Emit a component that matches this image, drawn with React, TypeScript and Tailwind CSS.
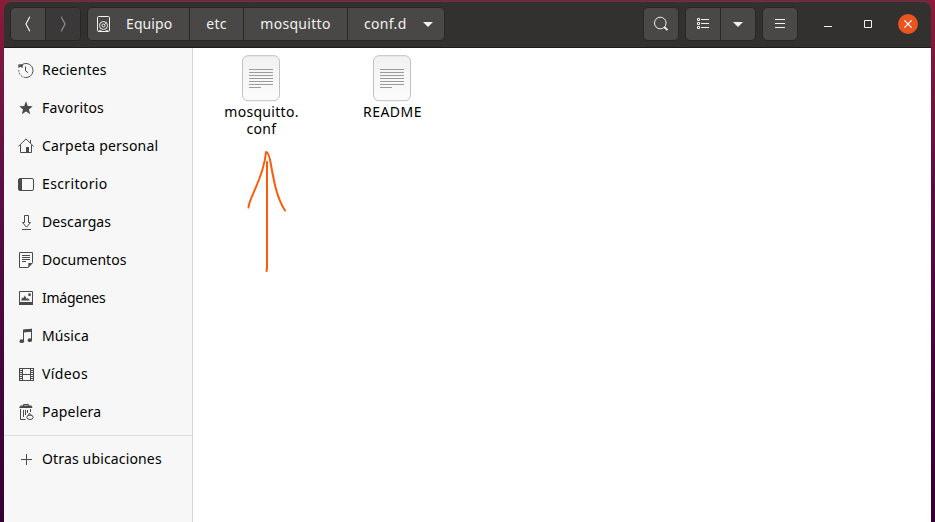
import React from 'react';

type IconProps = { children: React.ReactNode };

function Icon({ children }: IconProps) {
  return (
    <svg width="16" height="16" viewBox="0 0 16 16" fill="none" stroke="#4a4a4a" strokeWidth="1" className="shrink-0">
      {children}
    </svg>
  );
}

const places = [
  {
    label: 'Recientes',
    tracking: 'tracking-[0.17px]',
    icon: (
      <>
        <path d="M3.2 3.4A7 7 0 1 1 7.5 15.5" />
        <path d="M7.5 15.5A7 7 0 0 1 .8 8" strokeDasharray="2 1.2" />
        <path d="M.2 2.5 5 2.2 4.5 6 2.5 4.8.5 6Z" fill="#4a4a4a" stroke="none" />
        <path d="M7.5 4.5v4.3l2.5 1.9" />
      </>
    ),
  },
  {
    label: 'Favoritos',
    tracking: 'tracking-[0.18px]',
    icon: <path d="m8 1.3 1.8 4.7 5 .3-3.9 3.1 1.3 4.9L8 11.500l-4.200 2.800 1.300-4.900L1.200 6.300l5-.3Z" fill="#4a4a4a" stroke="none" />,
  },
  {
    label: 'Carpeta personal',
    tracking: 'tracking-[0.2px]',
    icon: (
      <>
        <path d="M.5 8.3 8 .9l7.500 7.400M2.500 7v7.500h11V7M12.500 5V2" />
        <path d="M8 9h3v5.500H8Z" fill="#4a4a4a" stroke="none" />
      </>
    ),
  },
  {
    label: 'Escritorio',
    tracking: 'tracking-[0.36px]',
    icon: (
      <>
        <rect x=".5" y="2.5" width="15" height="12" rx="1.5" />
        <path d="M1 3h3v11H1Z" fill="#4a4a4a" stroke="none" />
      </>
    ),
  },
  {
    label: 'Descargas',
    tracking: 'tracking-[0.1px]',
    icon: <path d="M6.5 1.5h4v7h2l-4 4.7-4-4.7h2ZM4 15.5h9" />,
  },
  {
    label: 'Documentos',
    tracking: 'tracking-[0.06px]',
    icon: (
      <>
        <path d="M1.5.5h13v10.2l-4.3 4.8H1.5ZM4 3.5h8M4 5.5h8M4 7.5h8M4 9.5h4" />
        <path d="M14.5 11h-4.2v4.5Z" fill="#4a4a4a" stroke="none" />
      </>
    ),
  },
  {
    label: 'Imágenes',
    tracking: 'tracking-[-0.25px]',
    icon: (
      <>
        <path d="M1.5 1.5h13v12h-13Z" />
        <path d="M1 12h14v3H1ZM3 10.5l1.5-3 1 .5 1.3-2.5 2 3.5 1-1 2 2.5Z" fill="#4a4a4a" stroke="none" />
        <circle cx="11.5" cy="4.7" r="1.4" fill="#4a4a4a" stroke="none" />
      </>
    ),
  },
  {
    label: 'Música',
    tracking: 'tracking-[0.1px]',
    icon: (
      <>
        <path d="M5.5 13V2.5l8-1.2V12" />
        <path d="M5 1.5 14 .8v3L5 4.5Z" fill="#4a4a4a" stroke="none" />
        <ellipse cx="3.8" cy="13.2" rx="2.3" ry="1.9" fill="#4a4a4a" stroke="none" />
        <ellipse cx="11.8" cy="12.2" rx="2.2" ry="1.9" fill="#4a4a4a" stroke="none" />
      </>
    ),
  },
  {
    label: 'Vídeos',
    tracking: 'tracking-[0.4px]',
    icon: (
      <>
        <path d="M4.5 2v13M12.5 2v13M4 2.5h9M4 8.5h9M4 14.5h9" />
        <path d="M2.5 2v13M14.5 2v13" strokeWidth="3" strokeDasharray="1 1" />
        <path d="M1.5 2v13M15.5 2v13" />
      </>
    ),
  },
  {
    label: 'Papelera',
    tracking: 'tracking-[0.2px]',
    icon: (
      <>
        <path d="M5.5 2V.5h5V2M2.5 5v10.5h5M5.5 6v7M7.5 6v5M9.5 6v3M12.5 5v3" />
        <path d="M2.5 1.5h11l1 2.5H1Z" fill="#4a4a4a" stroke="none" />
        <ellipse cx="12" cy="13.3" rx="3.2" ry="2.200" />
        <path d="m10.300 11.200 1.200-2 1.800 2" />
      </>
    ),
  },
];

function PlaceRow({ label, tracking, icon }: { label: string; tracking: string; icon: React.ReactNode }) {
  return (
    <li className="flex h-[38px] items-center gap-2 pl-[14px]">
      <Icon>{icon}</Icon>
      <span className={`pb-[2px] whitespace-nowrap ${tracking}`}>{label}</span>
    </li>
  );
}

const group = 'flex h-[34px] overflow-hidden rounded-[5px] border border-[#282626] bg-[#4a4846]';
const cell = 'flex items-center justify-center';

function Glyph({ children }: IconProps) {
  return (
    <svg width="16" height="16" viewBox="0 0 16 16" fill="none" stroke="#f2f1f0" className="shrink-0">
      {children}
    </svg>
  );
}

function DownArrow() {
  return (
    <svg width="10" height="5" viewBox="0 0 10 5" className="shrink-0">
      <path d="M0 0h10L5 5Z" fill="#f2f1f0" />
    </svg>
  );
}

function HeaderBar() {
  return (
    <header className="flex h-[47px] items-center rounded-t-[8px] border-t border-b border-t-[#494545] border-b-[#1c1a1a] bg-[#333030] pb-px pl-[6px] text-[#f2f1f0]">
      <div className={`${group} w-[71px]`}>
        <button className={`${cell} w-[34px]`}>
          <Glyph><path d="M9.8.8 6 8l3.8 7.2" strokeWidth="1.2" /></Glyph>
        </button>
        <button className={`${cell} flex-1 border-l border-[#282626] bg-[#3a3838]`}>
          <Glyph><path d="M6.2.8 10 8l-3.8 7.2" stroke="#92908e" strokeWidth="1.2" /></Glyph>
        </button>
      </div>

      <nav className={`${group} ml-[6px] w-[358px]`}>
        <button className="flex w-[101px] items-center gap-[15px] pl-[7px]">
          <Glyph>
            <rect x="2.5" y=".5" width="12" height="15" rx="1.2" />
            <circle cx="8.5" cy="9.5" r="4" />
            <circle cx="8.5" cy="9.5" r="1.5" />
            <path d="m9 9 2.5-2.5M3.5 14.5h3M10.5 14.5h3" strokeWidth=".7" />
          </Glyph>
          <span className="pb-px tracking-[0.1px]">Equipo</span>
        </button>
        <button className={`${cell} w-[54px] border-l border-[#282626] pb-px tracking-[0.3px]`}>etc</button>
        <button className={`${cell} w-[104px] border-l border-[#282626] pb-px tracking-[0.3px]`}>mosquitto</button>
        <button className="flex flex-1 items-center gap-4 border-l border-[#282626] pl-[16px]">
          <span className="pb-px tracking-[0.3px]">conf.d</span>
          <DownArrow />
        </button>
      </nav>

      <div className={`${group} ml-auto w-[36px]`}>
        <button className={`${cell} flex-1`}>
          <Glyph>
            <circle cx="7.3" cy="7" r="5.8" />
            <path d="m11.2 11 3.3 3.2" strokeWidth="1.8" />
          </Glyph>
        </button>
      </div>
      <div className={`${group} ml-[6px] w-[71px]`}>
        <button className={`${cell} w-[34px]`}>
          <Glyph>
            <path d="M2.5 2.5h2v2h-2ZM2.5 6.5h2v2h-2ZM2.5 10.5h2v2h-2ZM6 3.5h8M6 7.5h8M6 11.5h8" />
          </Glyph>
        </button>
        <button className={`${cell} flex-1 border-l border-[#282626]`}>
          <DownArrow />
        </button>
      </div>
      <div className={`${group} ml-[6px] w-[36px]`}>
        <button className={`${cell} flex-1`}>
          <Glyph><path d="M3 3.5h10M3 7.5h10M3 11.5h10" /></Glyph>
        </button>
      </div>

      <div className="ml-[22px] mr-[13px] flex items-center">
        <button className="mr-[28px]"><Glyph><path d="M4 10.5h8" /></Glyph></button>
        <button className="mr-[22px] -ml-[4px]"><Glyph><path d="M4.5 4.5h7v7h-7Z" /></Glyph></button>
        <button className="flex size-[20px] items-center justify-center rounded-full bg-[#e95420]">
          <svg width="8" height="8" viewBox="0 0 8 8"><path d="m.4.4 7.2 7.2M7.6.4.4 7.6" stroke="#fff" strokeWidth="1.2" /></svg>
        </button>
      </div>
    </header>
  );
}

function TextFileIcon() {
  return (
    <svg width="38" height="47" viewBox="0 0 38 47" fill="none" className="mr-px block">
      <defs>
        <linearGradient id="sheet" x1="0" y1="0" x2="0" y2="1">
          <stop stopColor="#f1f1f1" />
          <stop offset="1" stopColor="#fcfcfc" />
        </linearGradient>
      </defs>
      <rect x=".5" y=".7" width="37" height="45" rx="5.5" fill="url(#sheet)" stroke="#c1c1c1" />
      <path d="M7 14.5h24M7 17.5h24M7 20.5h24M7 23.5h24M7 26.5h24M7 29.5h24M7 32.5h12" stroke="#9b9b9b" />
    </svg>
  );
}

export default function App() {
  return (
    <div className="relative h-[522px] w-[935px] overflow-hidden bg-linear-to-b from-[#8d1b38] via-[#5b0d43] via-35% to-[#330032] px-1 pt-px font-['Noto_Sans',sans-serif] text-[14px] leading-[17px] text-black">
      <div className="flex h-[521px] flex-col">
        <HeaderBar />
        <div className="flex min-h-0 flex-1">
          <aside className="w-[189px] shrink-0 border-r border-[#d5d5d5] bg-[#f7f7f7] pt-[3px]">
            <ul>
              {places.map((p) => <PlaceRow key={p.label} {...p} />)}
            </ul>
            <div className="mt-[4px] mb-[4px] h-px bg-[#dcdcdc]" />
            <ul>
              <PlaceRow label="Otras ubicaciones" tracking="tracking-[0.15px]" icon={<path d="M3 8.5h11M8.5 3v11" />} />
            </ul>
          </aside>
          <main className="flex flex-1 items-start bg-white pt-[7px] pl-[3px]">
            <figure className="flex w-[131px] flex-col items-center text-center">
              <TextFileIcon />
              <figcaption className="mt-[1px] tracking-[0.3px]">mosquitto.<br />conf</figcaption>
            </figure>
            <figure className="flex w-[131px] flex-col items-center text-center">
              <TextFileIcon />
              <figcaption className="mt-[1px] tracking-[0.5px]">README</figcaption>
            </figure>
          </main>
        </div>
      </div>
      <svg className="pointer-events-none absolute top-[140px] left-[230px]" width="80" height="140" viewBox="0 0 80 140" fill="none" stroke="#ff5a0a" strokeWidth="2" strokeLinecap="round" strokeLinejoin="round">
        <path d="M18.5 67.5C19 57 34 38 36 12Q39 12 41 25C44 42 47 58 55 70.5M37 22v106l-.5 3" />
      </svg>
    </div>
  );
}
